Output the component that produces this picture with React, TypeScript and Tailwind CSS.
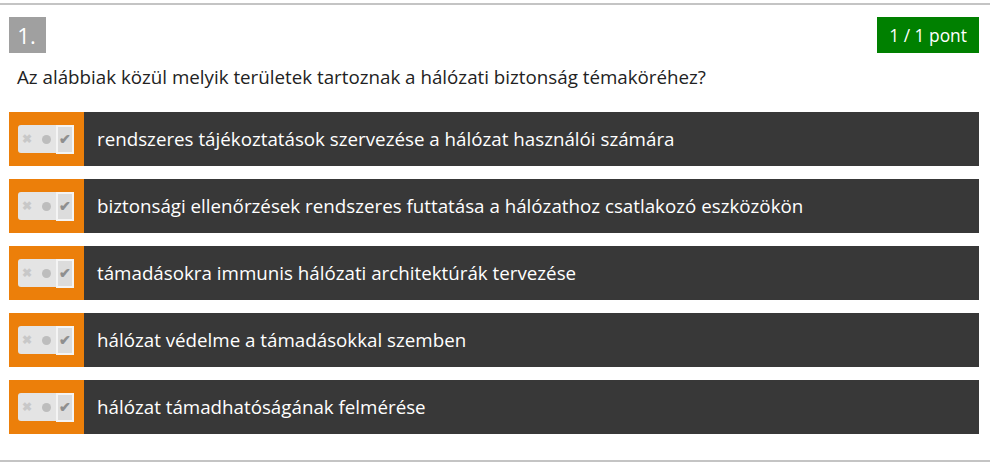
const ANSWERS = [
  "rendszeres tájékoztatások szervezése a hálózat használói számára",
  "biztonsági ellenőrzések rendszeres futtatása a hálózathoz csatlakozó eszközökön",
  "támadásokra immunis hálózati architektúrák tervezése",
  "hálózat védelme a támadásokkal szemben",
  "hálózat támadhatóságának felmérése",
];

function Toggle() {
  return (
    <div className="flex h-[28px] w-[56px] items-center rounded-[3px] bg-[#e4e4e4]">
      <span className="flex w-[19px] justify-center text-[12px] font-bold leading-none text-[#c8c8c8]">✖</span>
      <span className="flex w-[19px] justify-center">
        <span className="h-[9px] w-[9px] rounded-full bg-[#bdbdbd]" />
      </span>
      <span className="flex h-[29px] w-[18px] items-center justify-center border-2 border-[#f4f4f4] bg-[#dcdcdc] text-[14px] font-bold leading-none text-[#8f8f8f]">
        ✔
      </span>
    </div>
  );
}

export default function App() {
  return (
    <div className="h-[463px] w-[990px] bg-white pt-[3px] font-['Open_Sans',sans-serif]">
      <div className="border-b-2 border-t-2 border-[#c4c4c4] pb-[26px] pl-[9px] pr-[11px] pt-[12px]">
        <div className="flex items-start justify-between">
          <div className="flex h-[36px] w-[37px] items-center justify-center bg-[#a0a0a0] pr-[2px] text-[22px] text-white">1.</div>
          <div className="flex h-[36px] items-center bg-[#008000] px-[12px] text-[17.4px] text-white">1 / 1 pont</div>
        </div>
        <p className="mt-[11px] pl-[8px] text-[18.75px] leading-[26px] text-[#222]">
          Az alábbiak közül melyik területek tartoznak a hálózati biztonság témaköréhez?
        </p>
        <div className="mt-[22px] flex flex-col gap-[13px]">
          {ANSWERS.map(a => (
            <div key={a} className="flex h-[54px] bg-[#383838]">
              <div className="flex w-[75px] shrink-0 items-center justify-center bg-[#ec7f0a] pr-[2px]">
                <Toggle />
              </div>
              <div className="flex items-center pl-[13px] text-[18.75px] text-white">{a}</div>
            </div>
          ))}
        </div>
      </div>
    </div>
  );
}
